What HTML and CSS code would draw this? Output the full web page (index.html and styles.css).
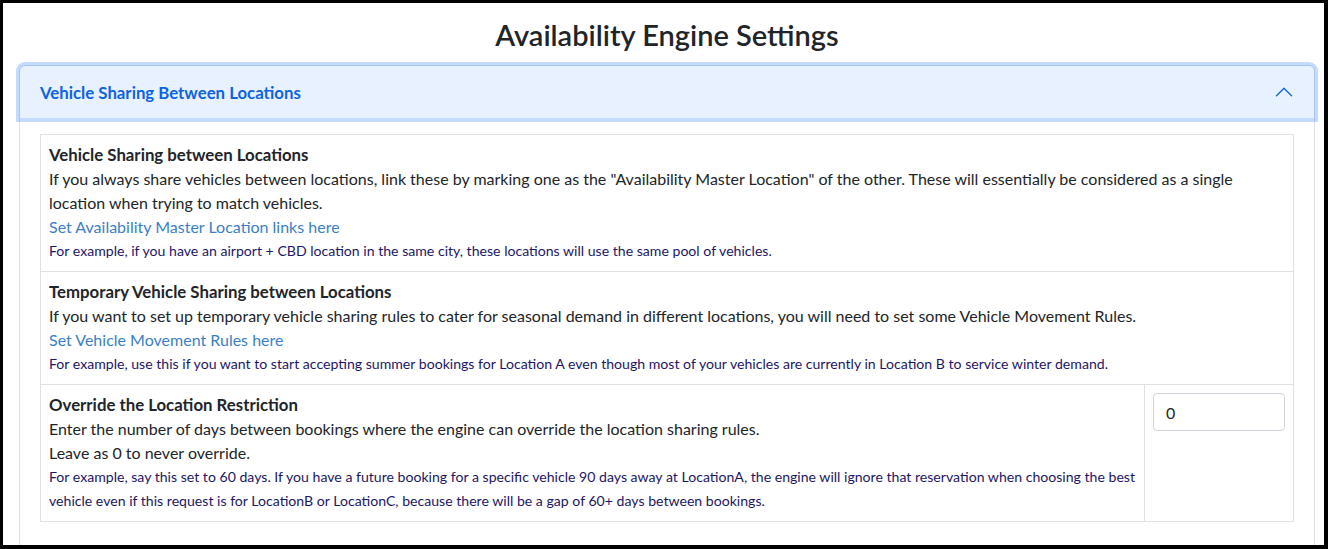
FILE: index.html
```html
<!DOCTYPE html>
<html lang="en">
<head>
  <meta charset="UTF-8" />
  <title>Availability Engine Settings</title>
  <link rel="stylesheet" href="styles.css">
</head>
<body>
  <div class="frame">
    <h3 class="page-title">Availability Engine Settings</h3>

    <div class="accordion-item">
      <h2 class="accordion-header">
        <button class="accordion-button" type="button">
          <span>Vehicle Sharing Between Locations</span>
          <svg class="chevron" viewBox="0 0 16 16" width="20" height="20">
            <path d="M1.646 11.354a.5.5 0 0 0 .708 0L8 5.707l5.646 5.647a.5.5 0 0 0 .708-.708l-6-6a.5.5 0 0 0-.708 0l-6 6a.5.5 0 0 0 0 .708z"/>
          </svg>
        </button>
      </h2>

      <div class="accordion-body">
        <table class="settings-table">
          <tr>
            <td colspan="2">
              <div class="setting-title">Vehicle Sharing between Locations</div>
              <div>If you always share vehicles between locations, link these by marking one as the "Availability Master Location" of the other. These will essentially be considered as a single location when trying to match vehicles.</div>
              <div><a href="#">Set Availability Master Location links here</a></div>
              <div class="hint">For example, if you have an airport + CBD location in the same city, these locations will use the same pool of vehicles.</div>
            </td>
          </tr>
          <tr>
            <td colspan="2">
              <div class="setting-title">Temporary Vehicle Sharing between Locations</div>
              <div>If you want to set up temporary vehicle sharing rules to cater for seasonal demand in different locations, you will need to set some Vehicle Movement Rules.</div>
              <div><a href="#">Set Vehicle Movement Rules here</a></div>
              <div class="hint">For example, use this if you want to start accepting summer bookings for Location A even though most of your vehicles are currently in Location B to service winter demand.</div>
            </td>
          </tr>
          <tr>
            <td>
              <div class="setting-title">Override the Location Restriction</div>
              <div>Enter the number of days between bookings where the engine can override the location sharing rules.</div>
              <div>Leave as 0 to never override.</div>
              <div class="hint">For example, say this set to 60 days. If you have a future booking for a specific vehicle 90 days away at LocationA, the engine will ignore that reservation when choosing the best vehicle even if this request is for LocationB or LocationC, because there will be a gap of 60+ days between bookings.</div>
            </td>
            <td class="input-cell">
              <input class="form-control" type="text" value="0">
            </td>
          </tr>
        </table>
      </div>
    </div>
  </div>
</body>
</html>
```

FILE: styles.css
```css
body {
  margin: 0;
  font-family: 'Lato', 'Open Sans', sans-serif;
  font-size: 16px;
  line-height: 1.5;
  color: #212529;
  background: #fff;
}

.frame {
  height: 549px;
  box-sizing: border-box;
  border: solid #000;
  border-width: 3px 4px 4px 3px;
  padding: 0 9px 0 16px;
  overflow: hidden;
}

.page-title {
  margin: 15px 0 13px;
  font-size: 29px;
  font-weight: 600;
  line-height: 34px;
  text-align: center;
}

.accordion-item {
  border: 1px solid #dee2e6;
  border-radius: 6px 6px 0 0;
}

.accordion-header {
  margin: 0;
}

.accordion-button {
  display: flex;
  align-items: center;
  justify-content: space-between;
  width: 100%;
  padding: 15px 20px 13px;
  border: 0;
  border-radius: 5px 5px 0 0;
  background: #e7f1ff;
  color: #0c63e4;
  font: inherit;
  font-size: 16.8px;
  font-weight: 700;
  line-height: 24px;
  text-align: left;
  box-shadow: 0 0 0 4px rgba(13, 110, 253, 0.25);
  position: relative;
}

.chevron {
  fill: #0c63e4;
  flex-shrink: 0;
  margin-top: -2px;
}

.accordion-body {
  padding: 16px 20px 40px;
}

/* Settings table */
.settings-table {
  width: 100%;
  border-collapse: collapse;
}

.settings-table td {
  border: 1px solid #dee2e6;
  padding: 8px;
  vertical-align: top;
}

.setting-title {
  font-size: 16.8px;
  font-weight: 700;
  line-height: 24px;
}

.settings-table a {
  color: #3c7fc8;
  text-decoration: none;
}

.hint {
  font-size: 14.1px;
  line-height: 24px;
  color: #1d1667;
}

.input-cell {
  width: 132px;
}

.form-control {
  display: block;
  width: 100%;
  box-sizing: border-box;
  height: 38px;
  padding: 6px 12px;
  font: inherit;
  color: #212529;
  border: 1px solid #ced4da;
  border-radius: 4px;
}
```
